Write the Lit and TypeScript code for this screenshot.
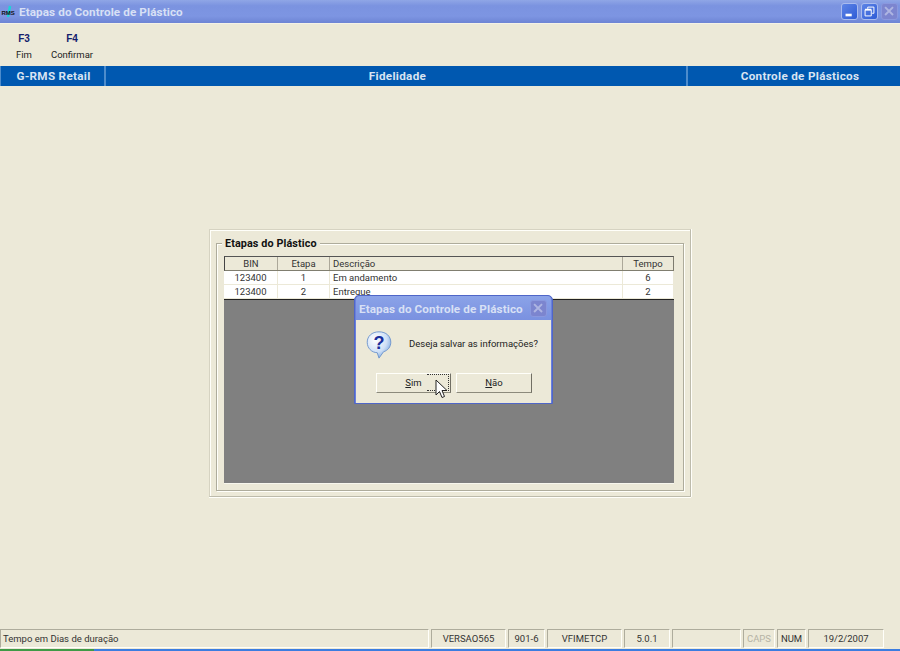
import { LitElement, html, css, svg } from "lit";
import { customElement } from "lit/decorators.js";

@customElement("app-root")
export class AppRoot extends LitElement {
  static styles = css`
    :host { display: block; width: 900px; height: 651px; overflow: hidden; position: relative; background: #ece9d8; font-family: Roboto, "Liberation Sans", Arial, sans-serif; font-size: 9.5px; color: #222; }
    .page { display: flex; flex-direction: column; height: 651px; }
    .title { height: 24px; box-sizing: border-box; display: flex; align-items: center; background: linear-gradient(180deg, #8fa6e6 0%, #7b93e0 25%, #7d95e2 70%, #6d84d4 100%); border-bottom: 1px solid #f4f2e6; flex: none; }
    .logo { width: 16px; height: 14px; margin: 0 2px 0 1px; flex: none; }
    .title-text { color: #d8e0f5; font-weight: 700; font-size: 11.7px; letter-spacing: 0.1px; flex: 1; }
    .wbtns { display: flex; gap: 3px; margin-right: 2px; }
    .wbtn { width: 17px; height: 17px; border-radius: 3px; border: 1px solid #a9bbee; box-sizing: border-box; background: linear-gradient(135deg, #5d84e6, #2f5cd6); display: block; }
    .wbtn.off { background: #7c85cf; border-color: #8a98de; }
    .tools { height: 42px; flex: none; display: flex; box-sizing: border-box; padding-top: 9px; }
    .tool { display: flex; flex-direction: column; align-items: center; width: 48px; }
    .tool b { color: #14206c; font-size: 10px; line-height: 11px; font-family: "Liberation Sans", sans-serif; }
    .tool span { line-height: 12px; margin-top: 5px; color: #222; }
    .band { height: 20px; flex: none; background: #0058b0; display: grid; grid-template-columns: 106px 582px 212px; color: #d9e4f2; font-weight: 700; font-size: 11.7px; letter-spacing: 0.3px; line-height: 20px; text-align: center; box-sizing: border-box; }
    .band div { border-right: 2px solid #4d8ccc; box-sizing: border-box; }
    .band div:nth-child(2) { padding-left: 3px; }
    .band div:last-child { border-right: 0; padding-left: 12px; }
    .band div:first-child { border-left: 1px solid #4d8ccc; padding-left: 2px; }
    .main { flex: 1; display: flex; justify-content: center; padding-top: 143px; min-height: 0; }
    .outer { width: 482px; height: 268px; box-sizing: border-box; border: 1px solid #bdbbab; border-top-color: #d6d3c2; border-left-color: #d6d3c2; box-shadow: inset 1px 1px 0 #fffffa, 0 1px 0 #fffffa, 1px 0 0 #fffffa; padding: 13px 6px 5px; }
    .group { position: relative; height: 248px; box-sizing: border-box; border: 1px solid #aeac9c; box-shadow: 1px 1px 0 #fffffa, inset 1px 1px 0 #fffffa; padding: 12px 9px 7px 7px; }
    .legend { position: absolute; left: 5px; top: -6px; background: #ece9d8; padding: 0 3px 0 3px; font-weight: 700; font-size: 10.8px; line-height: 12px; letter-spacing: 0.1px; color: #111; }
    .grid { height: 228px; width: 450px; box-sizing: border-box; background: #808080; border-bottom: 1px solid #f8f7ee; display: flex; flex-direction: column; }
    .row { display: grid; grid-template-columns: 54px 52px 293px 51px; height: 14px; line-height: 13px; background: #fff; box-sizing: border-box; }
    .row div { border-right: 1px solid #ece9d8; border-bottom: 1px solid #ece9d8; text-align: center; box-sizing: border-box; white-space: nowrap; overflow: hidden; color: #333; }
    .row div.l { text-align: left; padding-left: 3px; }
    .row.head { height: 15px; background: #ece9d8; border: 1px solid #7d7b6e; border-bottom: 1px solid #807e70; border-left-color: #444; border-top-color: #555; line-height: 13px; grid-template-columns: 53px 52px 293px 50px; }
    .row.head div { border-right: 1px solid #aca899; border-bottom: 0; }
    .row.head div:last-child { border-right: 0; }
    .row.last { border-bottom: 1px solid #222; height: 15px; }
    .status { height: 20px; flex: none; display: flex; box-sizing: border-box; gap: 2px; }
    .cell { height: 19px; box-sizing: border-box; border: 1px solid; border-color: #aeac9c #fffffa #fffffa #aeac9c; line-height: 17px; text-align: center; white-space: nowrap; color: #333; }
    .cell.left { text-align: left; padding-left: 2px; }
    .cell.dim { color: #b5b3a5; }
    .task { height: 2px; flex: none; background: linear-gradient(90deg, #3f9a46 0 94px, #3b7de0 94px); }
    .dialog { position: absolute; left: 354px; top: 295px; width: 199px; height: 109px; box-sizing: border-box; border-radius: 5px 5px 0 0; background: #6a80dc; padding: 0 1px; display: flex; flex-direction: column; border: 1px solid #4f66c8; }
    .dlg-title { height: 24px; flex: none; display: flex; align-items: center; padding: 1px 4px 0 3px; box-sizing: border-box; color: #d8e0f5; font-weight: 700; font-size: 11.7px; letter-spacing: 0.1px; background: linear-gradient(180deg, #8ba3e8, #7a91e0); border-radius: 4px 4px 0 0; }
    .dlg-title span { flex: 1; white-space: nowrap; }
    .dlg-body { flex: 1; background: #ece9d8; display: flex; flex-direction: column; }
    .msg { display: flex; align-items: center; height: 48px; padding: 0 0 0 9px; box-sizing: border-box; color: #222; }
    .msg svg { width: 28px; height: 29px; margin-right: 16px; flex: none; }
    .msg span { position: relative; top: -1px; }
    .btns { display: flex; gap: 5px; padding: 5px 0 0 20px; }
    .btn { width: 75px; height: 20px; box-sizing: border-box; border: 1px solid; border-color: #fffffa #716f64 #8c8a7c #fffffa; background: #ece9d8; text-align: center; line-height: 18px; color: #222; position: relative; }
    .btn + .btn { width: 76px; }
    .focus { position: absolute; right: 1px; top: 0; bottom: 1px; width: 22px; border: 1px dotted #333; border-left: 0; box-sizing: border-box; }
    .cursor { position: absolute; left: 435px; top: 379px; width: 14px; height: 20px; }
  `;

  private icons() {
    return {
      min: svg`<svg class="wbtn" viewBox="0 0 17 17"><rect x="4" y="11" width="7" height="3" fill="#fff"/></svg>`,
      max: svg`<svg class="wbtn" viewBox="0 0 17 17"><path d="M6.5 5.5V3.5H13.5V10.5H11.5M3.5 6.5H10.5V13.5H3.5Z" fill="none" stroke="#fff" stroke-width="1.1"/><path d="M3.5 6.5H10.5" stroke="#fff" stroke-width="2"/></svg>`,
      x: svg`<svg class="wbtn off" viewBox="0 0 17 17"><path d="M3.5 3.5L12.5 12.5M12.5 3.5L3.5 12.5" stroke="#aeb5e2" stroke-width="2.2"/></svg>`,
    };
  }

  render() {
    const i = this.icons();
    const cells: [number, string, string?][] = [
      [429, "Tempo em Dias de duração", "left"],
      [75, "VERSAO565"], [37, "901-6"], [75, "VFIMETCP"], [46, "5.0.1"], [69, ""],
      [32, "CAPS", "dim"], [29, "NUM"], [76, "19/2/2007"],
    ];
    return html`<div class="page">
      <div class="title">
        <svg class="logo" viewBox="0 0 16 14">
          <path d="M9 1L7 12" stroke="#19d6d6" stroke-width="2.4"/>
          <text x="0.5" y="10" font-size="6" font-weight="bold" font-family="Liberation Sans" fill="#111">RMS</text>
        </svg>
        <div class="title-text">Etapas do Controle de Plástico</div>
        <div class="wbtns">${i.min}${i.max}${i.x}</div>
      </div>
      <div class="tools">
        <div class="tool"><b>F3</b><span>Fim</span></div>
        <div class="tool"><b>F4</b><span>Confirmar</span></div>
      </div>
      <div class="band"><div>G-RMS Retail</div><div>Fidelidade</div><div>Controle de Plásticos</div></div>
      <div class="main">
        <div class="outer">
          <div class="group">
            <div class="legend">Etapas do Plástico</div>
            <div class="grid">
              <div class="row head"><div>BIN</div><div>Etapa</div><div class="l">Descrição</div><div>Tempo</div></div>
              <div class="row"><div>123400</div><div>1</div><div class="l">Em andamento</div><div>6</div></div>
              <div class="row last"><div>123400</div><div>2</div><div class="l">Entregue</div><div>2</div></div>
            </div>
          </div>
        </div>
      </div>
      <div class="status">
        ${cells.map(([w, t, c]) => html`<div class="cell ${c ?? ""}" style="width:${w}px">${t}</div>`)}
      </div>
      <div class="task"></div>
    </div>
    <div class="dialog">
      <div class="dlg-title"><span>Etapas do Controle de Plástico</span>${i.x}</div>
      <div class="dlg-body">
        <div class="msg">
          <svg viewBox="0 0 30 32">
            <defs><radialGradient id="q" cx="0.35" cy="0.3" r="0.8"><stop offset="0" stop-color="#ffffff"/><stop offset="0.6" stop-color="#cfe0f6"/><stop offset="1" stop-color="#6f9fdc"/></radialGradient></defs>
            <path d="M15 2C7 2 2 7 2 13.5C2 20 7 25 13 25L15 31L20 24C25 22.5 28 18.5 28 13.5C28 7 23 2 15 2Z" fill="url(#q)" stroke="#6b93cc"/>
            <text x="15" y="21" text-anchor="middle" font-size="20" font-weight="bold" font-family="Liberation Sans" fill="#1a2f9c">?</text>
          </svg>
          <span>Deseja salvar as informações?</span>
        </div>
        <div class="btns">
          <div class="btn"><u>S</u>im<div class="focus"></div></div>
          <div class="btn"><u>N</u>ão</div>
        </div>
      </div>
    </div>
    <svg class="cursor" viewBox="0 0 14 20"><path d="M1 1V16L4.5 12.5L7 18.5L9.5 17.5L7 11.5H12Z" fill="#fff" stroke="#222"/></svg>`;
  }
}
